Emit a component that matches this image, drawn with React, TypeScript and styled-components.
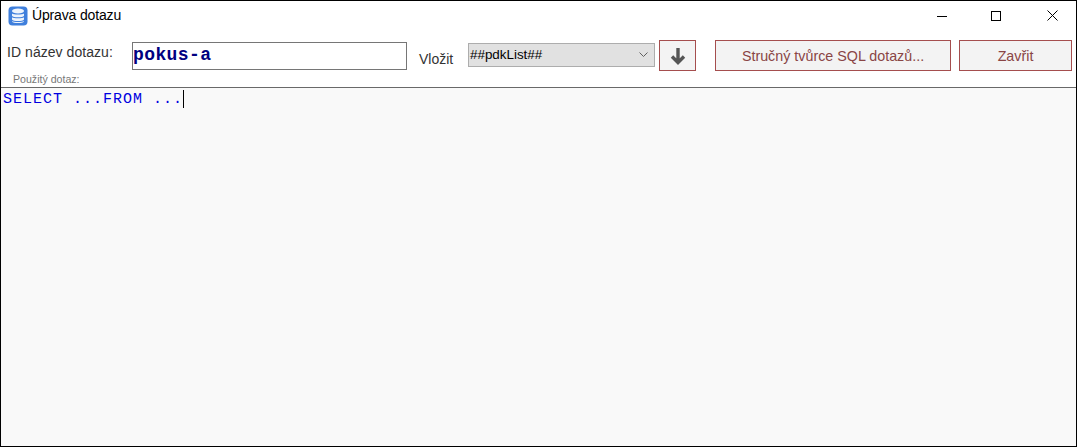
import React from 'react';
import styled, { createGlobalStyle } from 'styled-components';

const Global = createGlobalStyle`
  html, body { margin: 0; padding: 0; background: #fff; }
  #root { width: 1077px; height: 447px; }
  * { box-sizing: border-box; }
`;
const Win = styled.div`
  width: 1077px; height: 447px; border: 1px solid #000; background: #fff;
  display: flex; flex-direction: column; overflow: hidden;
  font-family: "Liberation Sans", Arial, sans-serif;
`;
const TitleBar = styled.div`
  height: 30px; flex: none; display: flex; align-items: center; padding: 0 18px 0 7px;
`;
const AppIcon = styled.svg`width: 20px; height: 20px; flex: none; margin: -1px 4px 0 0;`;
const Title = styled.div`font-size: 14px; letter-spacing: -0.15px; color: #000; flex: 1; margin-top: -2px;`;
const WinControls = styled.div`display: flex; align-items: center; gap: 44px; margin-top: -1px;`;
const CloseIcon = styled.svg`margin-left: 2px;`;
const Toolbar = styled.div`
  height: 57px; flex: none; display: flex; align-items: flex-start; border-bottom: 1px solid #696969;
  padding: 10px 4px 0 0;
`;
const LabelCol = styled.div`width: 131px; flex: none; display: flex; flex-direction: column;`;
const IdLabel = styled.div`font-size: 14px; letter-spacing: 0.05px; color: #333; padding: 3px 0 0 6px; line-height: 16px;`;
const UsedLabel = styled.div`font-size: 10.6px; color: #777; padding: 13px 0 0 12px; line-height: 12px;`;
const NameInput = styled.div`
  width: 275px; height: 28px; margin-top: 1px; border: 1px solid #767676; background: #fff; flex: none;
  font-family: "Liberation Mono", monospace; font-weight: 700; font-size: 18px; letter-spacing: 0.4px; color: #000080;
  display: flex; align-items: center; padding-bottom: 2px;
`;
const InsertLabel = styled.div`font-size: 14px; color: #333; margin: 10px 0 0 12px; width: 49px; flex: none; line-height: 16px;`;
const Combo = styled.div`
  width: 187px; height: 24px; margin-top: 2px; border: 1px solid #adadad; background: #e1e1e1; flex: none;
  display: flex; align-items: center; justify-content: space-between; padding: 0 6px 2px 1px;
  font-size: 13.4px; color: #000;
`;
const ActionBtn = styled.div<{ $w: number; $ml: number }>`
  width: ${p => p.$w}px; margin-left: ${p => p.$ml}px; height: 31px; margin-top: -1px; flex: none;
  border: 1px solid #a54e4e; background: #f3f3f3; color: #8a4545; font-size: 14.3px;
  display: flex; align-items: center; justify-content: center;
`;
const Editor = styled.div`
  flex: 1; background: #f9f9f9; padding: 3px 0 0 2px;
  font-family: "Liberation Mono", monospace; font-size: 15px; letter-spacing: 1px; line-height: 17px; color: #0000e0;
  display: flex; align-items: flex-start;
`;
const Caret = styled.span`width: 1px; height: 18px; background: #000; margin-top: -1px;`;

export default function App() {
  return (
    <Win>
      <Global />
      <TitleBar>
        <AppIcon viewBox="0 0 20 20">
          <rect x="0.5" y="0.5" width="19" height="19" rx="4" fill="#3f7fdc" />
          <ellipse cx="10" cy="5" rx="6" ry="2.4" fill="#eef4fc" />
          <path d="M4 7.4c1 1.5 11 1.5 12 0v2.4c-1 2-11 2-12 0z" fill="#eef4fc" />
          <path d="M4 11.2c1 1.5 11 1.5 12 0v2.4c-1 2-11 2-12 0z" fill="#eef4fc" />
          <path d="M4 15c1 1.3 11 1.3 12 0v.4c-1 2.2-11 2.2-12 0z" fill="#eef4fc" />
        </AppIcon>
        <Title>Úprava dotazu</Title>
        <WinControls>
          <svg width="10" height="10" viewBox="0 0 10 10"><rect y="5" width="10" height="1" fill="#000" /></svg>
          <svg width="10" height="10" viewBox="0 0 10 10"><rect x="0.5" y="0.5" width="9" height="9" fill="none" stroke="#000" /></svg>
          <CloseIcon width="11" height="11" viewBox="0 0 11 11"><path d="M0.5 0.5l10 10M10.5 0.5l-10 10" stroke="#000" fill="none" /></CloseIcon>
        </WinControls>
      </TitleBar>
      <Toolbar>
        <LabelCol>
          <IdLabel>ID název dotazu:</IdLabel>
          <UsedLabel>Použitý dotaz:</UsedLabel>
        </LabelCol>
        <NameInput>pokus-a</NameInput>
        <InsertLabel>Vložit</InsertLabel>
        <Combo>
          <span>##pdkList##</span>
          <svg width="9" height="5" viewBox="0 0 9 5"><path d="M0.5 0.5l4 4 4-4" fill="none" stroke="#606060" /></svg>
        </Combo>
        <ActionBtn $w={37} $ml={4}>
          <svg width="16" height="18" viewBox="0 0 16 18"><path d="M8 1v14M2 9.500l6 6 6-6" fill="none" stroke="#555" strokeWidth="3.400" /></svg>
        </ActionBtn>
        <ActionBtn $w={236} $ml={19}>Stručný tvůrce SQL dotazů...</ActionBtn>
        <ActionBtn $w={113} $ml={8}>Zavřit</ActionBtn>
      </Toolbar>
      <Editor>
        <span>SELECT ...FROM ...</span>
        <Caret />
      </Editor>
    </Win>
  );
}
